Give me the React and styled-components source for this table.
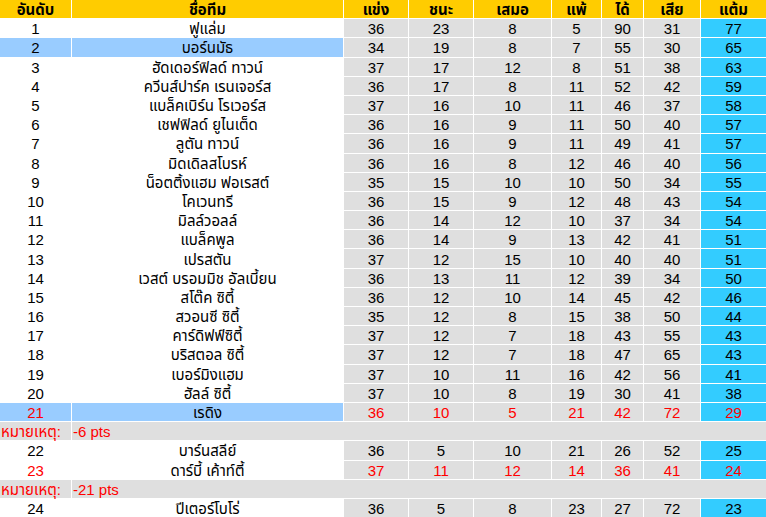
import styled, { createGlobalStyle } from "styled-components";

const GlobalStyle = createGlobalStyle`
  html, body {
    margin: 0;
    padding: 0;
    background: #fff;
  }
  body {
    font-family: "Liberation Sans", "Noto Sans Thai", "Noto Sans", "DejaVu Sans", sans-serif;
    font-size: 15px;
  }
`;

const COLS = "71px 271px 64px 64px 77px 49px 41px 56px 65px";

const Table = styled.div`
  width: 766px;
  display: flex;
  flex-direction: column;
  gap: 1px;
  background: #fff;
`;

const Row = styled.div`
  display: grid;
  grid-template-columns: ${COLS};
  column-gap: 1px;
  height: 18.2px;
  color: ${(p) => (p.$red ? "#ff0000" : "#000")};
`;

const HeadCell = styled.div`
  background: #ffcc00;
  font-weight: bold;
  color: #000;
  display: flex;
  align-items: center;
  justify-content: center;
  line-height: 1;
`;

const Cell = styled.div`
  background: ${(p) =>
    p.$kind === "pts" ? "#33ccff" : p.$kind === "hl" ? "#99ccff" : p.$kind === "plain" ? "#fff" : "#dfdfdf"};
  display: flex;
  align-items: center;
  justify-content: ${(p) => (p.$left ? "flex-start" : "center")};
  padding-left: ${(p) => (p.$left ? "1px" : "0")};
  padding-top: 1px;
  box-sizing: border-box;
  line-height: 1;
  white-space: nowrap;
  grid-column: ${(p) => p.$span || "auto"};
`;

const TeamName = styled(Cell)`
  color: #000;
`;

const headers = ["อันดับ", "ชื่อทีม", "แข่ง", "ชนะ", "เสมอ", "แพ้", "ได้", "เสีย", "แต้ม"];

const rows = [
  [1, "ฟูแล่ม", 36, 23, 8, 5, 90, 31, 77],
  [2, "บอร์นมัธ", 34, 19, 8, 7, 55, 30, 65, "hl"],
  [3, "ฮัดเดอร์ฟิลด์ ทาวน์", 37, 17, 12, 8, 51, 38, 63],
  [4, "ควีนส์ปาร์ค เรนเจอร์ส", 36, 17, 8, 11, 52, 42, 59],
  [5, "แบล็คเบิร์น โรเวอร์ส", 37, 16, 10, 11, 46, 37, 58],
  [6, "เชฟฟิลด์ ยูไนเต็ด", 36, 16, 9, 11, 50, 40, 57],
  [7, "ลูตัน ทาวน์", 36, 16, 9, 11, 49, 41, 57],
  [8, "มิดเดิลสโบรห์", 36, 16, 8, 12, 46, 40, 56],
  [9, "น็อตติ้งแฮม ฟอเรสต์", 35, 15, 10, 10, 50, 34, 55],
  [10, "โคเวนทรี", 36, 15, 9, 12, 48, 43, 54],
  [11, "มิลล์วอลล์", 36, 14, 12, 10, 37, 34, 54],
  [12, "แบล็คพูล", 36, 14, 9, 13, 42, 41, 51],
  [13, "เปรสตัน", 37, 12, 15, 10, 40, 40, 51],
  [14, "เวสต์ บรอมมิช อัลเบี้ยน", 36, 13, 11, 12, 39, 34, 50],
  [15, "สโต๊ค ซิตี้", 36, 12, 10, 14, 45, 42, 46],
  [16, "สวอนซี ซิตี้", 35, 12, 8, 15, 38, 50, 44],
  [17, "คาร์ดิฟฟ์ซิตี้", 37, 12, 7, 18, 43, 55, 43],
  [18, "บริสตอล ซิตี้", 37, 12, 7, 18, 47, 65, 43],
  [19, "เบอร์มิงแฮม", 37, 10, 11, 16, 42, 56, 41],
  [20, "ฮัลล์ ซิตี้", 37, 10, 8, 19, 30, 41, 38],
  [21, "เรดิง", 36, 10, 5, 21, 42, 72, 29, "hl", true],
  { note: "-6 pts" },
  [22, "บาร์นสลีย์", 36, 5, 10, 21, 26, 52, 25],
  [23, "ดาร์บี้ เค้าท์ตี้", 37, 11, 12, 14, 36, 41, 24, null, true],
  { note: "-21 pts" },
  [24, "ปีเตอร์โบโร่", 36, 5, 8, 23, 27, 72, 23],
];

const TeamRow = ({ data }) => {
  const [rank, name, ...rest] = data;
  const stats = rest.slice(0, 7);
  const side = rest[7] === "hl" ? "hl" : "plain";
  return (
    <Row $red={rest[8]}>
      <Cell $kind={side}>{rank}</Cell>
      <TeamName $kind={side}>{name}</TeamName>
      {stats.map((v, i) => (
        <Cell key={i} $kind={i === 6 ? "pts" : "grey"}>
          {v}
        </Cell>
      ))}
    </Row>
  );
};

const NoteRow = ({ text }) => (
  <Row $red>
    <Cell $left>หมายเหตุ:</Cell>
    <Cell $left $span="2 / -1">
      {text}
    </Cell>
  </Row>
);

export default function App() {
  return (
    <>
      <GlobalStyle />
      <Table>
        <Row>
          {headers.map((h) => (
            <HeadCell key={h}>{h}</HeadCell>
          ))}
        </Row>
        {rows.map((r, i) =>
          r.note ? <NoteRow key={i} text={r.note} /> : <TeamRow key={i} data={r} />
        )}
      </Table>
    </>
  );
}
